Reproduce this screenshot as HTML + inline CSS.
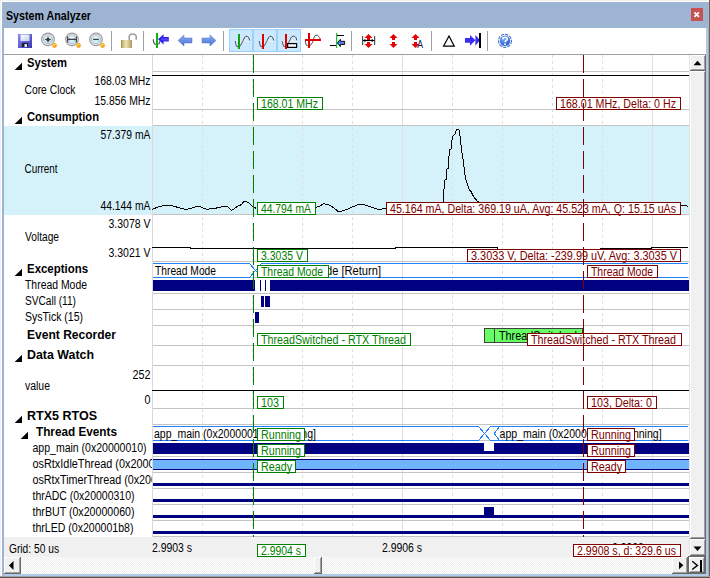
<!DOCTYPE html>
<html><head><meta charset="utf-8"><style>
html,body{margin:0;padding:0;width:710px;height:578px;overflow:hidden;background:#f0f0f0}
svg{display:block}
text{font-family:"Liberation Sans", sans-serif}
</style></head><body>
<svg width="710" height="578" viewBox="0 0 710 578" shape-rendering="crispEdges">
<rect x="0" y="0" width="710" height="578" fill="#f0f0f0" />
<rect x="1" y="1" width="708" height="576" fill="#ffffff" />
<rect x="2" y="2" width="706" height="574" fill="#9db5d3" />
<rect x="706" y="28" width="1" height="548" fill="#aecae8" />
<rect x="707" y="28" width="1" height="548" fill="#aecae8" />
<rect x="4" y="574" width="704" height="1" fill="#b0cbe8" />
<rect x="4" y="575" width="704" height="1" fill="#b0cbe8" />
<rect x="709" y="0" width="1" height="578" fill="#646464" />
<rect x="708" y="28" width="1" height="550" fill="#a8a8a8" />
<rect x="708" y="2" width="1" height="26" fill="#b4b4b4" />
<rect x="0" y="576" width="710" height="1" fill="#a0a0a0" />
<rect x="0" y="577" width="710" height="1" fill="#585858" />
<text x="6" y="20" font-size="12" fill="#000" font-weight="bold" textLength="85" lengthAdjust="spacingAndGlyphs" >System Analyzer</text>
<rect x="691" y="8" width="12" height="13" fill="#c75050" />
<path d="M694.4 12.4 L698.9 16.8 M698.9 12.4 L694.4 16.8" stroke="#fff" stroke-width="1.8" shape-rendering="geometricPrecision"/>
<rect x="4" y="28" width="702" height="26" fill="#ffffff" />
<rect x="4" y="54" width="702" height="1" fill="#a0a0a0" />
<g shape-rendering="geometricPrecision">
<defs>
<linearGradient id="gsave" x1="0" y1="0" x2="1" y2="1"><stop offset="0" stop-color="#8a8af0"/><stop offset="1" stop-color="#3838b0"/></linearGradient>
<radialGradient id="glens" cx="0.45" cy="0.4" r="0.6"><stop offset="0" stop-color="#f0faff"/><stop offset="1" stop-color="#b8e4f8"/></radialGradient>
<radialGradient id="gorg" cx="0.4" cy="0.35" r="0.7"><stop offset="0" stop-color="#ffe040"/><stop offset="1" stop-color="#f08000"/></radialGradient>
<linearGradient id="glock" x1="0" y1="0" x2="1" y2="0"><stop offset="0" stop-color="#9a8648"/><stop offset="0.15" stop-color="#c8b878"/><stop offset="0.45" stop-color="#ebe4b8"/><stop offset="1" stop-color="#b09a58"/></linearGradient>
<linearGradient id="garr" x1="0" y1="0" x2="0" y2="1"><stop offset="0" stop-color="#8ab0f0"/><stop offset="1" stop-color="#4a70d8"/></linearGradient>
<radialGradient id="ghelp" cx="0.4" cy="0.3" r="0.8"><stop offset="0" stop-color="#80b8ff"/><stop offset="1" stop-color="#1848c0"/></radialGradient>
</defs>
<!-- save -->
<linearGradient id="glab" x1="0" y1="0" x2="1" y2="1"><stop offset="0" stop-color="#ffffff"/><stop offset="1" stop-color="#c4cff0"/></linearGradient>
<rect x="18" y="34" width="14" height="14" fill="url(#gsave)"/>
<rect x="20.5" y="34.5" width="9" height="6.5" fill="url(#glab)"/>
<rect x="22" y="43" width="6" height="4" fill="#181830"/>
<rect x="24.5" y="44" width="2.5" height="3" fill="#e8e8f0"/>
<!-- zoom in / fit / out -->
<g transform="translate(0,0)">
<circle cx="48" cy="39.4" r="6.3" fill="#f4f4f4" stroke="#9a9a9a" stroke-width="1.2"/>
<circle cx="48" cy="39.4" r="4.5" fill="url(#glens)" stroke="#b0b0b0" stroke-width="0.9"/>
<circle cx="54.5" cy="45.4" r="2.3" fill="url(#gorg)"/>
<path d="M48 35.9 Q48.5 38.9 51.5 39.4 Q48.5 39.9 48 42.9 Q47.5 39.9 44.5 39.4 Q47.5 38.9 48 35.9 Z" fill="#3a3a3a"/>
</g>
<g transform="translate(24,0)">
<circle cx="48" cy="39.4" r="6.3" fill="#f4f4f4" stroke="#9a9a9a" stroke-width="1.2"/>
<circle cx="48" cy="39.4" r="4.5" fill="url(#glens)" stroke="#b0b0b0" stroke-width="0.9"/>
<circle cx="54.5" cy="45.4" r="2.3" fill="url(#gorg)"/>
<path d="M43.6 36.4 V42.4 M52.4 36.4 V42.4 M43.8 39.4 H52.2" stroke="#404040" stroke-width="1.1" fill="none"/><path d="M44.2 39.4 L45.6 38.2 V40.6 Z M51.8 39.4 L50.4 38.2 V40.6 Z" fill="#404040"/>
</g>
<g transform="translate(48,0)">
<circle cx="48" cy="39.4" r="6.3" fill="#f4f4f4" stroke="#9a9a9a" stroke-width="1.2"/>
<circle cx="48" cy="39.4" r="4.5" fill="url(#glens)" stroke="#b0b0b0" stroke-width="0.9"/>
<circle cx="54.5" cy="45.4" r="2.3" fill="url(#gorg)"/>
<path d="M45.2 39.4 H50.8" stroke="#404040" stroke-width="1.3" fill="none"/>
</g>
<!-- separators -->
<rect x="111" y="31" width="1" height="20" fill="#a0a0a0"/>
<rect x="143" y="31" width="1" height="20" fill="#a0a0a0"/>
<rect x="223" y="31" width="1" height="20" fill="#a0a0a0"/>
<rect x="351" y="31" width="1" height="20" fill="#a0a0a0"/>
<rect x="431" y="31" width="1" height="20" fill="#a0a0a0"/>
<rect x="487" y="31" width="1" height="20" fill="#a0a0a0"/>
<!-- lock -->
<path d="M129.2 40.5 V36 L130.8 34.2 H134.6 L136.2 36 V39.8" fill="none" stroke="#9c9c9c" stroke-width="1.5"/>
<rect x="121" y="40" width="11" height="8" fill="url(#glock)"/>
<!-- goto cursor icon -->
<path d="M153.3 39.2 L153.5 41.6 L154.4 43.9 L156 44.6 M158.3 44.4 L159.3 43.3 L159.8 41.3" fill="none" stroke="#454545" stroke-width="1.1"/>
<rect x="156" y="33" width="2" height="15" fill="#10b010"/>
<path d="M158 39.3 L163.6 34.2 V37.1 H168.8 V41.4 H163.6 V44.6 Z" fill="#2c20f0"/>
<path d="M161 39.3 L163.2 37.5 V38.2 H168 V40.4 H163.2 V41.1 Z" fill="#7a58f0" opacity="0.6"/>
<!-- left/right arrows -->
<path d="M178 40.5 L184 35 V38 H192 V43 H184 V46 Z" fill="url(#garr)" stroke="#5070c8" stroke-width="0.5"/>
<path d="M216 40.5 L210 35 V38 H202 V43 H210 V46 Z" fill="url(#garr)" stroke="#5070c8" stroke-width="0.5"/>
<!-- highlighted buttons -->
<rect x="229.5" y="29.5" width="23" height="22" fill="#cce8ff" stroke="#99d1ff" stroke-width="1"/>
<rect x="253.5" y="29.5" width="23" height="22" fill="#cce8ff" stroke="#99d1ff" stroke-width="1"/>
<rect x="277.5" y="29.5" width="23" height="22" fill="#cce8ff" stroke="#99d1ff" stroke-width="1"/>
<path d="M235 41.2 H250" stroke="#f4f0ee" stroke-width="1"/>
<path d="M235.3 41 L235.7 43.7 L236.5 46.3 L238 46.7 L239.9 46.3 L241 44.8 L242.2 42.5 L243.3 40.3 L244.4 37.6 L246 36.3 L247.5 36.3 L249 38 L249.6 40.6" fill="none" stroke="#4a4a4a" stroke-width="0.95"/>
<rect x="238" y="34" width="2" height="15" fill="#10a010"/>
<path d="M259 41.2 H274" stroke="#f4f0ee" stroke-width="1"/>
<path d="M259.3 41 L259.7 43.7 L260.5 46.3 L262 46.7 L263.9 46.3 L265 44.8 L266.2 42.5 L267.3 40.3 L268.4 37.6 L270 36.3 L271.5 36.3 L273 38 L273.6 40.6" fill="none" stroke="#4a4a4a" stroke-width="0.95"/>
<rect x="262" y="34" width="2" height="15" fill="#e00000"/>
<path d="M282 41.2 H297" stroke="#f4f0ee" stroke-width="1"/>
<path d="M282.2 41.2 L282.6 43.3 L283.7 46.3 L285 46.7 M287 46 L289 41.8 L290.2 39.5 L291.3 37.2 L293.2 36.1 L294.7 36.3 L296.3 38 L296.6 40.3" fill="none" stroke="#4a4a4a" stroke-width="0.95"/>
<rect x="285" y="34" width="2" height="15" fill="#e00000"/>
<rect x="287.6" y="43.6" width="9" height="3.8" fill="#f4f8ff" stroke="#000" stroke-width="1.2"/>
<!-- icon4 -->
<path d="M305.2 41 L306.2 45.2 L307.7 45.6 L310.7 45.2 L312.6 42.2 L313.8 38 L315.3 35.3 L317.6 35.3 L319.7 37.6 L320 39" fill="none" stroke="#4a4a4a" stroke-width="0.95"/>
<rect x="308" y="33" width="2" height="15" fill="#e00000"/>
<rect x="305" y="39" width="16" height="2" fill="#e00000"/>
<!-- icon5 -->
<rect x="336" y="33" width="1.3" height="15" fill="#20c040"/>
<rect x="337" y="35" width="7" height="1" fill="#000"/>
<rect x="330" y="45" width="6" height="1" fill="#000"/>
<path d="M337.3 42.9 L340.4 39.3 V41.3 H344.6 V44.5 H340.4 V46.6 Z" fill="#5080f0" stroke="#000" stroke-width="0.9"/>
<!-- icon A: arrows with bars -->
<rect x="362" y="36" width="1.2" height="9" fill="#505050"/>
<rect x="374" y="36" width="1.2" height="9" fill="#505050"/>
<path d="M368.5 34 L372.5 38 H370.0 V40 H367.0 V38 H364.5 Z M367.0 42 H370.0 V44 H372.5 L368.5 48 L364.5 44 H367.0 Z" fill="#e80000"/>
<path d="M363 40.5 H374.5" stroke="#000" stroke-width="1.1"/>
<path d="M363.5 40.5 L365 39 L366 40.5 L365 42 Z M373.5 40.5 L372 39 L371 40.5 L372 42 Z" fill="#000"/>
<!-- icon B -->
<path d="M393.5 34 L397.5 38 H395.0 V40 H392.0 V38 H389.5 Z M392.0 42 H395.0 V44 H397.5 L393.5 48 L389.5 44 H392.0 Z" fill="#e80000"/>
<!-- icon C -->
<path d="M415.5 34 L419.5 38 H417.0 V40 H414.0 V38 H411.5 Z M414.0 42 H417.0 V44 H419.5 L415.5 48 L411.5 44 H414.0 Z" fill="#e80000"/>
<text x="417.3" y="47.7" font-size="10" fill="#102050" textLength="5.8" lengthAdjust="spacingAndGlyphs">A</text>
<!-- delta -->
<path d="M449 36 L454.2 46 H443.6 Z" fill="#fff" stroke="#000" stroke-width="1.25" stroke-linejoin="miter"/>
<!-- double arrow + bar -->
<path d="M465 38 H470 V35 L475.4 40.3 V35 L480 40.3 L475.4 45.8 V40.3 L470 45.8 V42.8 H465 Z" fill="#3a2cf0"/>
<rect x="479" y="33" width="2" height="15" fill="#000"/>
<!-- help -->
<circle cx="505" cy="40.8" r="6.5" fill="none" stroke="#4a7ad0" stroke-width="1.2" stroke-dasharray="3.2 1.1"/>
<circle cx="505" cy="40.8" r="5.2" fill="url(#ghelp)"/>
<path d="M502.9 39.2 C502.9 36.7 507.3 36.7 507.3 39 C507.3 40.6 505.1 40.7 505.1 42.3" fill="none" stroke="#fff" stroke-width="1.6"/>
<circle cx="505.1" cy="44.2" r="0.95" fill="#fff"/>
</g>

<rect x="4" y="55" width="701" height="482" fill="#ffffff" />
<rect x="4" y="537" width="701" height="20" fill="#f0f0f0" />
<rect x="4" y="126" width="685" height="88" fill="#d5f2fa" />
<rect x="4" y="214" width="148" height="1" fill="#d5f2fa" />
<rect x="152" y="55" width="1" height="482" fill="#d9d9d9" />
<line x1="202.5" y1="55" x2="202.5" y2="537" stroke="#dedede" stroke-width="1" stroke-dasharray="3 3"/>
<line x1="252.5" y1="55" x2="252.5" y2="537" stroke="#dedede" stroke-width="1" stroke-dasharray="3 3"/>
<line x1="302.5" y1="55" x2="302.5" y2="537" stroke="#dedede" stroke-width="1" stroke-dasharray="3 3"/>
<line x1="352.5" y1="55" x2="352.5" y2="537" stroke="#dedede" stroke-width="1" stroke-dasharray="3 3"/>
<line x1="452.5" y1="55" x2="452.5" y2="537" stroke="#dedede" stroke-width="1" stroke-dasharray="3 3"/>
<line x1="502.5" y1="55" x2="502.5" y2="537" stroke="#dedede" stroke-width="1" stroke-dasharray="3 3"/>
<line x1="552.5" y1="55" x2="552.5" y2="537" stroke="#dedede" stroke-width="1" stroke-dasharray="3 3"/>
<line x1="602.5" y1="55" x2="602.5" y2="537" stroke="#dedede" stroke-width="1" stroke-dasharray="3 3"/>
<rect x="402" y="55" width="1" height="482" fill="#dedede" />
<rect x="652" y="55" width="1" height="482" fill="#dedede" />
<rect x="153" y="71" width="536" height="1" fill="#c4c4c4" />
<rect x="153" y="109" width="536" height="1" fill="#c4c4c4" />
<rect x="153" y="125" width="536" height="1" fill="#c4c4c4" />
<rect x="153" y="214" width="536" height="1" fill="#c4c4c4" />
<rect x="153" y="261" width="536" height="1" fill="#c4c4c4" />
<rect x="153" y="277" width="536" height="1" fill="#c4c4c4" />
<rect x="153" y="293" width="536" height="1" fill="#c4c4c4" />
<rect x="153" y="309" width="536" height="1" fill="#c4c4c4" />
<rect x="153" y="325" width="536" height="1" fill="#c4c4c4" />
<rect x="153" y="345" width="536" height="1" fill="#c4c4c4" />
<rect x="153" y="365" width="536" height="1" fill="#c4c4c4" />
<rect x="153" y="408" width="536" height="1" fill="#c4c4c4" />
<rect x="153" y="424" width="536" height="1" fill="#c4c4c4" />
<rect x="153" y="440" width="536" height="1" fill="#c4c4c4" />
<rect x="153" y="456" width="536" height="1" fill="#c4c4c4" />
<rect x="153" y="472" width="536" height="1" fill="#c4c4c4" />
<rect x="153" y="488" width="536" height="1" fill="#c4c4c4" />
<rect x="153" y="504" width="536" height="1" fill="#c4c4c4" />
<rect x="153" y="520" width="536" height="1" fill="#c4c4c4" />
<rect x="153" y="536" width="536" height="1" fill="#c4c4c4" />
<rect x="689" y="55" width="1" height="502" fill="#e4e4e4" />
<rect x="152" y="75" width="537" height="1" fill="#000" />
<polyline points="152.3,209.4 157.8,207.0 164.7,205.5 170.9,205.5 177.9,207.4 185.7,209.4 188.8,208.9 195.0,207.0 199.6,206.3 204.3,208.6 207.4,209.4 210.5,208.6 215.1,208.3 221.3,207.0 226.0,206.0 229.0,207.8 231.4,210.2 234.5,208.6 236.8,206.7 239.1,205.5 241.5,204.7 243.8,201.6 247.7,202.1 250.8,204.7 253.1,207.0 256.2,208.3" fill="none" stroke="#000" stroke-width="1"/>
<polyline points="316.1,207.2 319.4,206.2 323.6,203.7 327.4,204.4 331.1,205.9 334.3,208.3 337.6,211.0 341.8,211.0 345.0,209.9 348.3,208.8 351.5,207.2 354.7,206.2 358.4,204.4 361.1,204.0 365.4,205.1 368.6,206.2 372.9,207.8 377.2,209.1 380.4,209.7 383.6,208.6 386.3,207.8" fill="none" stroke="#000" stroke-width="1"/>
<polyline points="436.0,207.0 443.2,206.0 443.5,197.4 444.5,180.3 446.4,179.5 446.4,169.4 448.4,168.6 448.7,158.5 449.9,149.6 451.0,149.1 451.8,140.6 453.1,135.6 454.9,134.3 456.5,129.7 458.8,129.7 459.6,132.0 460.4,139.8 461.9,152.3 463.5,162.4 465.5,178.7 467.4,184.2 468.9,188.9 471.3,192.0 473.6,196.7 477.5,201.3 480.0,203.0" fill="none" stroke="#000" stroke-width="1"/>
<polyline points="681.0,206.0 683.0,205.0 686.0,205.0 688.0,207.0" fill="none" stroke="#000" stroke-width="1"/>
<polyline points="152.0,247.0 190.0,247.0 190.0,248.0 395.0,248.0 395.0,247.0 497.0,247.0 497.0,249.0 600.0,249.0 600.0,248.0 651.0,248.0 651.0,247.0 688.0,247.0" fill="none" stroke="#000" stroke-width="1"/>
<path d="M153 263.5 H249.5 L255.5 270.5 L261.5 263.5 H688 M153 277.5 H249.5 L255.5 270.5 L261.5 277.5 H688" fill="none" stroke="#1e82ff" stroke-width="1"/>
<text x="155" y="275" font-size="12" fill="#000" textLength="61" lengthAdjust="spacingAndGlyphs" >Thread Mode</text>
<text x="326" y="275" font-size="12" fill="#000" textLength="55" lengthAdjust="spacingAndGlyphs" >de [Return]</text>
<rect x="153" y="280" width="102" height="11" fill="#000080" />
<rect x="260" y="280" width="1" height="11" fill="#000080" />
<rect x="265" y="280" width="1" height="11" fill="#000080" />
<rect x="270" y="280" width="419" height="11" fill="#000080" />
<rect x="261" y="296" width="3" height="11" fill="#000080" />
<rect x="265" y="296" width="5" height="11" fill="#000080" />
<rect x="255" y="312" width="4" height="11" fill="#000080" />
<rect x="484" y="328" width="99" height="15" fill="#404040" />
<rect x="485" y="329" width="97" height="13" fill="#66ff66" />
<rect x="494" y="328" width="1" height="15" fill="#404040" />
<text x="499" y="340" font-size="12" fill="#000" textLength="78" lengthAdjust="spacingAndGlyphs" >ThreadSwitched</text>
<rect x="152" y="390" width="537" height="1" fill="#000" />
<path d="M153 426.5 H478.5 L484.5 433.5 L490.5 426.5 H688 M153 440.5 H478.5 L484.5 433.5 L490.5 440.5 H688 M499.5 426.5 L494.3 433.5 L499.5 440.5" fill="none" stroke="#1e82ff" stroke-width="1"/>
<text x="154" y="438" font-size="12" fill="#000" textLength="162" lengthAdjust="spacingAndGlyphs" >app_main (0x20000010) [Running]</text>
<text x="499.6" y="438" font-size="12" fill="#000" textLength="162" lengthAdjust="spacingAndGlyphs" >app_main (0x20000010) [Running]</text>
<rect x="153" y="443" width="536" height="11" fill="#000080" />
<rect x="484" y="443" width="10" height="8" fill="#fff" />
<rect x="153" y="459" width="536" height="11" fill="#000080" />
<rect x="153" y="460" width="536" height="9" fill="#6eb4ff" />
<rect x="153" y="483" width="536" height="3" fill="#000080" />
<rect x="153" y="499" width="536" height="3" fill="#000080" />
<rect x="153" y="515" width="536" height="3" fill="#000080" />
<rect x="484" y="507" width="10" height="11" fill="#000080" />
<rect x="153" y="531" width="536" height="3" fill="#000080" />
<line x1="253.5" y1="55" x2="253.5" y2="537" stroke="#008000" stroke-width="1" stroke-dasharray="18 6"/>
<line x1="583.5" y1="55" x2="583.5" y2="537" stroke="#800000" stroke-width="1" stroke-dasharray="18 6"/>
<rect x="257" y="97" width="66" height="13" fill="#008000" />
<rect x="258" y="98" width="64" height="11" fill="#fff" />
<text x="261" y="108" font-size="12" fill="#008000" textLength="57" lengthAdjust="spacingAndGlyphs" >168.01 MHz</text>
<rect x="257" y="202" width="59" height="13" fill="#008000" />
<rect x="258" y="203" width="57" height="11" fill="#fff" />
<text x="261" y="213" font-size="12" fill="#008000" textLength="50" lengthAdjust="spacingAndGlyphs" >44.794 mA</text>
<rect x="257" y="249" width="51" height="13" fill="#008000" />
<rect x="258" y="250" width="49" height="11" fill="#fff" />
<text x="261" y="260" font-size="12" fill="#008000" textLength="42" lengthAdjust="spacingAndGlyphs" >3.3035 V</text>
<rect x="257" y="265" width="72" height="13" fill="#008000" />
<rect x="258" y="266" width="70" height="11" fill="#fff" />
<text x="261" y="276" font-size="12" fill="#008000" textLength="62" lengthAdjust="spacingAndGlyphs" >Thread Mode</text>
<rect x="257" y="333" width="154" height="13" fill="#008000" />
<rect x="258" y="334" width="152" height="11" fill="#fff" />
<text x="261" y="344" font-size="12" fill="#008000" textLength="145" lengthAdjust="spacingAndGlyphs" >ThreadSwitched - RTX Thread</text>
<rect x="257" y="396" width="27" height="13" fill="#008000" />
<rect x="258" y="397" width="25" height="11" fill="#fff" />
<text x="261" y="407" font-size="12" fill="#008000" textLength="18" lengthAdjust="spacingAndGlyphs" >103</text>
<rect x="257" y="428" width="48" height="13" fill="#008000" />
<rect x="258" y="429" width="46" height="11" fill="#fff" />
<text x="261" y="439" font-size="12" fill="#008000" textLength="40" lengthAdjust="spacingAndGlyphs" >Running</text>
<rect x="257" y="444" width="48" height="13" fill="#008000" />
<rect x="258" y="445" width="46" height="11" fill="#fff" />
<text x="261" y="455" font-size="12" fill="#008000" textLength="40" lengthAdjust="spacingAndGlyphs" >Running</text>
<rect x="257" y="460" width="39" height="13" fill="#008000" />
<rect x="258" y="461" width="37" height="11" fill="#fff" />
<text x="261" y="471" font-size="12" fill="#008000" textLength="31" lengthAdjust="spacingAndGlyphs" >Ready</text>
<rect x="556" y="97" width="125" height="13" fill="#800000" />
<rect x="557" y="98" width="123" height="11" fill="#fff" />
<text x="560" y="108" font-size="12" fill="#800000" textLength="116" lengthAdjust="spacingAndGlyphs" >168.01 MHz, Delta: 0 Hz</text>
<rect x="386" y="202" width="295" height="13" fill="#800000" />
<rect x="387" y="203" width="293" height="11" fill="#fff" />
<text x="390" y="213" font-size="12" fill="#800000" textLength="286" lengthAdjust="spacingAndGlyphs" >45.164 mA, Delta: 369.19 uA, Avg: 45.523 mA, Q: 15.15 uAs</text>
<rect x="467" y="249" width="214" height="13" fill="#800000" />
<rect x="468" y="250" width="212" height="11" fill="#fff" />
<text x="471" y="260" font-size="12" fill="#800000" textLength="206" lengthAdjust="spacingAndGlyphs" >3.3033 V, Delta: -239.99 uV, Avg: 3.3035 V</text>
<rect x="587" y="265" width="71" height="13" fill="#800000" />
<rect x="588" y="266" width="69" height="11" fill="#fff" />
<text x="591" y="276" font-size="12" fill="#800000" textLength="62" lengthAdjust="spacingAndGlyphs" >Thread Mode</text>
<rect x="527" y="333" width="155" height="13" fill="#800000" />
<rect x="528" y="334" width="153" height="11" fill="#fff" />
<text x="531" y="344" font-size="12" fill="#800000" textLength="145" lengthAdjust="spacingAndGlyphs" >ThreadSwitched - RTX Thread</text>
<rect x="587" y="396" width="70" height="13" fill="#800000" />
<rect x="588" y="397" width="68" height="11" fill="#fff" />
<text x="591" y="407" font-size="12" fill="#800000" textLength="61" lengthAdjust="spacingAndGlyphs" >103, Delta: 0</text>
<rect x="587" y="428" width="48" height="13" fill="#800000" />
<rect x="588" y="429" width="46" height="11" fill="#fff" />
<text x="591" y="439" font-size="12" fill="#800000" textLength="40" lengthAdjust="spacingAndGlyphs" >Running</text>
<rect x="587" y="444" width="48" height="13" fill="#800000" />
<rect x="588" y="445" width="46" height="11" fill="#fff" />
<text x="591" y="455" font-size="12" fill="#800000" textLength="40" lengthAdjust="spacingAndGlyphs" >Running</text>
<rect x="587" y="460" width="39" height="13" fill="#800000" />
<rect x="588" y="461" width="37" height="11" fill="#fff" />
<text x="591" y="471" font-size="12" fill="#800000" textLength="31" lengthAdjust="spacingAndGlyphs" >Ready</text>
<line x1="583.5" y1="55" x2="583.5" y2="537" stroke="#800000" stroke-width="1" stroke-dasharray="18 6"/>
<clipPath id="lp"><rect x="4" y="55" width="148" height="482"/></clipPath>
<g clip-path="url(#lp)">
<polygon points="14.7,70 22,70 22,62.7" fill="#000" shape-rendering="geometricPrecision"/>
<text x="27" y="67" font-size="12" fill="#000" font-weight="bold" textLength="40" lengthAdjust="spacingAndGlyphs" >System</text>
<text x="24.5" y="94" font-size="12" fill="#000" textLength="51" lengthAdjust="spacingAndGlyphs" >Core Clock</text>
<text x="150.5" y="85" font-size="12" fill="#000" text-anchor="end" textLength="56" lengthAdjust="spacingAndGlyphs" >168.03 MHz</text>
<text x="150.5" y="105" font-size="12" fill="#000" text-anchor="end" textLength="56" lengthAdjust="spacingAndGlyphs" >15.856 MHz</text>
<polygon points="14.7,124 22,124 22,116.7" fill="#000" shape-rendering="geometricPrecision"/>
<text x="27" y="121" font-size="12" fill="#000" font-weight="bold" textLength="72" lengthAdjust="spacingAndGlyphs" >Consumption</text>
<text x="150.5" y="139" font-size="12" fill="#000" text-anchor="end" textLength="50" lengthAdjust="spacingAndGlyphs" >57.379 mA</text>
<text x="24.5" y="173" font-size="12" fill="#000" textLength="33" lengthAdjust="spacingAndGlyphs" >Current</text>
<text x="150.5" y="210" font-size="12" fill="#000" text-anchor="end" textLength="50" lengthAdjust="spacingAndGlyphs" >44.144 mA</text>
<text x="150.5" y="228" font-size="12" fill="#000" text-anchor="end" textLength="42" lengthAdjust="spacingAndGlyphs" >3.3078 V</text>
<text x="25" y="241" font-size="12" fill="#000" textLength="34" lengthAdjust="spacingAndGlyphs" >Voltage</text>
<text x="150.5" y="257" font-size="12" fill="#000" text-anchor="end" textLength="42" lengthAdjust="spacingAndGlyphs" >3.3021 V</text>
<polygon points="14.7,276 22,276 22,268.7" fill="#000" shape-rendering="geometricPrecision"/>
<text x="27" y="273" font-size="12" fill="#000" font-weight="bold" textLength="61" lengthAdjust="spacingAndGlyphs" >Exceptions</text>
<text x="25" y="289" font-size="12" fill="#000" textLength="62" lengthAdjust="spacingAndGlyphs" >Thread Mode</text>
<text x="25" y="305" font-size="12" fill="#000" textLength="51" lengthAdjust="spacingAndGlyphs" >SVCall (11)</text>
<text x="25" y="321" font-size="12" fill="#000" textLength="58" lengthAdjust="spacingAndGlyphs" >SysTick (15)</text>
<text x="27" y="339" font-size="12" fill="#000" font-weight="bold" textLength="89" lengthAdjust="spacingAndGlyphs" >Event Recorder</text>
<polygon points="14.7,362 22,362 22,354.7" fill="#000" shape-rendering="geometricPrecision"/>
<text x="27" y="359" font-size="12" fill="#000" font-weight="bold" textLength="67" lengthAdjust="spacingAndGlyphs" >Data Watch</text>
<text x="150.5" y="379" font-size="12" fill="#000" text-anchor="end" textLength="18" lengthAdjust="spacingAndGlyphs" >252</text>
<text x="25" y="390" font-size="12" fill="#000" textLength="25" lengthAdjust="spacingAndGlyphs" >value</text>
<text x="150.5" y="404" font-size="12" fill="#000" text-anchor="end" textLength="6" lengthAdjust="spacingAndGlyphs" >0</text>
<polygon points="14.7,423 22,423 22,415.7" fill="#000" shape-rendering="geometricPrecision"/>
<text x="27" y="420" font-size="12" fill="#000" font-weight="bold" textLength="70" lengthAdjust="spacingAndGlyphs" >RTX5 RTOS</text>
<polygon points="20.7,439 28,439 28,431.7" fill="#000" shape-rendering="geometricPrecision"/>
<text x="36" y="436" font-size="12" fill="#000" font-weight="bold" textLength="81" lengthAdjust="spacingAndGlyphs" >Thread Events</text>
<text x="32.5" y="452" font-size="12" fill="#000" textLength="114" lengthAdjust="spacingAndGlyphs" >app_main (0x20000010)</text>
<text x="32.5" y="468" font-size="12" fill="#000" textLength="150" lengthAdjust="spacingAndGlyphs" >osRtxIdleThread (0x20000000)</text>
<text x="32.5" y="484" font-size="12" fill="#000" textLength="158" lengthAdjust="spacingAndGlyphs" >osRtxTimerThread (0x20000000)</text>
<text x="32.5" y="500" font-size="12" fill="#000" textLength="102" lengthAdjust="spacingAndGlyphs" >thrADC (0x20000310)</text>
<text x="32.5" y="516" font-size="12" fill="#000" textLength="102" lengthAdjust="spacingAndGlyphs" >thrBUT (0x20000060)</text>
<text x="32.5" y="532" font-size="12" fill="#000" textLength="101" lengthAdjust="spacingAndGlyphs" >thrLED (0x200001b8)</text>
</g>
<text x="9" y="553" font-size="12" fill="#000" textLength="50" lengthAdjust="spacingAndGlyphs" >Grid: 50 us</text>
<text x="152" y="552" font-size="12" fill="#000" textLength="40" lengthAdjust="spacingAndGlyphs" >2.9903 s</text>
<text x="382" y="552" font-size="12" fill="#000" textLength="40" lengthAdjust="spacingAndGlyphs" >2.9906 s</text>
<text x="612" y="552" font-size="12" fill="#000" textLength="40" lengthAdjust="spacingAndGlyphs" >2.9908 s</text>
<rect x="257" y="544" width="49" height="13" fill="#008000" />
<rect x="258" y="545" width="47" height="11" fill="#fff" />
<text x="261" y="555" font-size="12" fill="#008000" textLength="40" lengthAdjust="spacingAndGlyphs" >2.9904 s</text>
<rect x="573" y="544" width="108" height="13" fill="#800000" />
<rect x="574" y="545" width="106" height="11" fill="#fff" />
<text x="577" y="555" font-size="12" fill="#800000" textLength="99" lengthAdjust="spacingAndGlyphs" >2.9908 s, d: 329.6 us</text>
<rect x="690" y="55" width="16" height="16" fill="#696969" />
<rect x="690" y="55" width="15" height="15" fill="#ffffff" />
<rect x="691" y="56" width="14" height="14" fill="#a0a0a0" />
<rect x="691" y="56" width="13" height="13" fill="#f0f0f0" />
<polygon points="693.6,65.2 701.4,65.2 697.5,60.8" fill="#000" shape-rendering="geometricPrecision"/>
<rect x="690" y="71" width="16" height="468" fill="#696969" />
<rect x="690" y="71" width="15" height="467" fill="#ffffff" />
<rect x="691" y="72" width="14" height="466" fill="#a0a0a0" />
<rect x="691" y="72" width="13" height="465" fill="#f0f0f0" />
<rect x="690" y="539" width="16" height="17" fill="#696969" />
<rect x="690" y="539" width="15" height="16" fill="#ffffff" />
<rect x="691" y="540" width="14" height="15" fill="#a0a0a0" />
<rect x="691" y="540" width="13" height="14" fill="#f0f0f0" />
<polygon points="693.5,546.5 701.5,546.5 697.5,551" fill="#000" shape-rendering="geometricPrecision"/>
<pattern id="chk" width="2" height="2" patternUnits="userSpaceOnUse"><rect width="2" height="2" fill="#ededed"/><rect width="1" height="1" fill="#ffffff"/><rect x="1" y="1" width="1" height="1" fill="#ffffff"/></pattern>
<rect x="4" y="557" width="701" height="17" fill="url(#chk)" />
<rect x="4" y="557" width="17" height="17" fill="#696969" />
<rect x="4" y="557" width="16" height="16" fill="#ffffff" />
<rect x="5" y="558" width="15" height="15" fill="#a0a0a0" />
<rect x="5" y="558" width="14" height="14" fill="#f0f0f0" />
<polygon points="13.5,561 13.5,570 9,565.5" fill="#000" shape-rendering="geometricPrecision"/>
<rect x="314" y="557" width="8" height="17" fill="#696969" />
<rect x="314" y="557" width="7" height="16" fill="#ffffff" />
<rect x="315" y="558" width="6" height="15" fill="#a0a0a0" />
<rect x="315" y="558" width="5" height="14" fill="#f0f0f0" />
<rect x="672" y="557" width="16" height="17" fill="#696969" />
<rect x="672" y="557" width="15" height="16" fill="#ffffff" />
<rect x="673" y="558" width="14" height="15" fill="#a0a0a0" />
<rect x="673" y="558" width="13" height="14" fill="#f0f0f0" />
<polygon points="679,561.5 683.4,565.3 679,569.3" fill="#000" shape-rendering="geometricPrecision"/>
<rect x="688" y="556" width="18" height="18" fill="#696969" />
<rect x="689" y="557" width="16" height="16" fill="#696969" />
<rect x="689" y="557" width="15" height="15" fill="#ffffff" />
<rect x="690" y="558" width="14" height="14" fill="#a0a0a0" />
<rect x="690" y="558" width="13" height="13" fill="#f0f0f0" />
<path d="M692.2 561.3 L697.4 565.4 L692.2 569.5" fill="none" stroke="#000" stroke-width="1.4" shape-rendering="geometricPrecision"/><rect x="700" y="560" width="2" height="12" fill="#000"/>
</svg>
</body></html>
